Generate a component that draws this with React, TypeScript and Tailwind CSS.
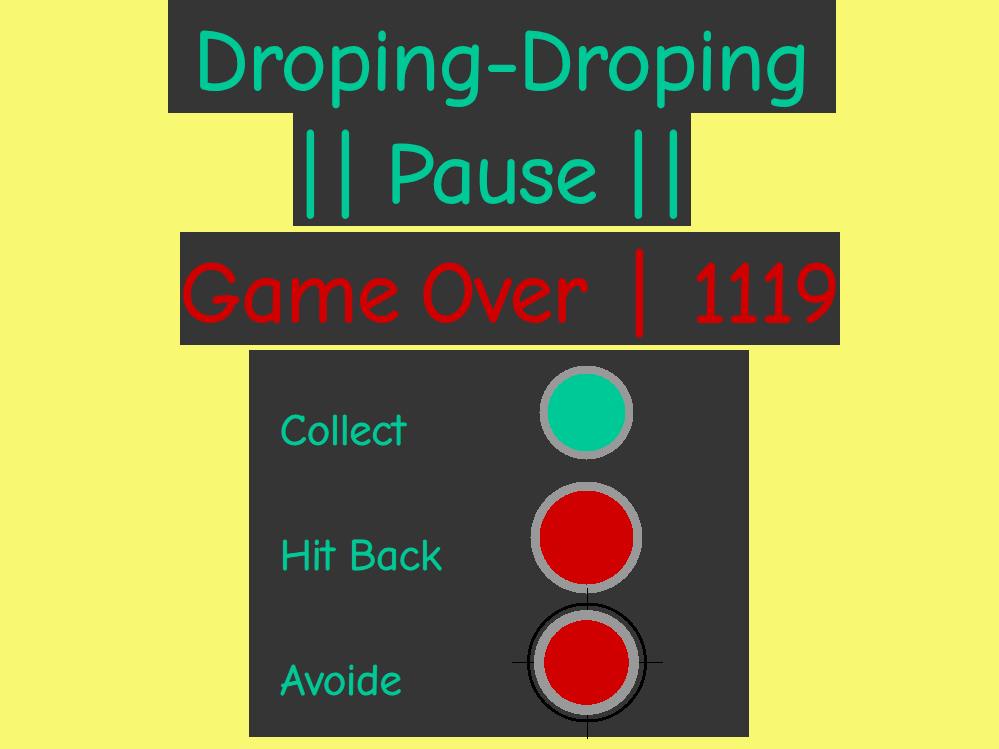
import type { ReactNode } from "react";

const GREEN = "#00c998";
const RED = "#d00000";
const GREY = "#999999";

function Banner({ className, children }: { className: string; children: ReactNode }) {
  return (
    <div
      className={`flex h-[113px] items-center whitespace-pre bg-[#353535] pt-3 text-[86px] leading-[101px] [-webkit-text-stroke:2px_currentColor] ${className}`}
    >
      {children}
    </div>
  );
}

function Bar() {
  return <span className="w-[35px] text-center">|</span>;
}

function Ball({ color, outer, inner, target }: { color: string; outer: number; inner: number; target?: boolean }) {
  return (
    <svg
      className="h-[125px] w-[152px] overflow-visible"
      viewBox="0 0 152 125"
      shapeRendering="crispEdges"
      aria-hidden="true"
    >
      {target && (
        <g fill="none" stroke="#000000">
          <path d="M0.5 62.5H152M76 -12.5V138.5" strokeWidth="1" />
          <circle cx="76" cy="62.5" r="58.5" strokeWidth="3" />
        </g>
      )}
      <circle cx="75.5" cy="62.5" r={outer} fill={GREY} />
      <circle cx="75.5" cy="62.5" r={inner} fill={color} />
    </svg>
  );
}

function LegendRow({ label, children }: { label: string; children: ReactNode }) {
  return (
    <li className="flex h-[125px] items-center">
      <span className="w-[262px] pt-9 pl-[31px] text-[44px] leading-[56px] [-webkit-text-stroke:1px_currentColor]">
        {label}
      </span>
      {children}
    </li>
  );
}

export default function App() {
  return (
    <main className="min-h-screen overflow-hidden bg-[#f8f872] font-['Comic_Sans_MS','Comic_Neue',Lato,sans-serif] text-[#00c998]">
      <div className="mx-auto flex w-[663px] flex-col items-start">
        <Banner className="w-[668px] justify-center">
          <h1>Droping-Droping</h1>
        </Banner>
        <Banner className="ml-[125px] w-[398px] justify-center">
          <Bar />
          <Bar />
          <h2 className="w-[258px] text-center">Pause</h2>
          <Bar />
          <Bar />
        </Banner>
        <Banner className="mt-1.5 ml-3 w-[660px] justify-between text-[#d00000]">
          <h2 className="flex gap-5">
            <span>Game</span>
            <span>Over</span>
          </h2>
          <Bar />
          <span>1119</span>
        </Banner>
        <ul className="mt-[5px] ml-[81px] w-[500px] bg-[#353535] pb-3">
          <LegendRow label="Collect">
            <Ball color={GREEN} outer={47} inner={39} />
          </LegendRow>
          <LegendRow label="Hit Back">
            <Ball color={RED} outer={56} inner={47} />
          </LegendRow>
          <LegendRow label="Avoide">
            <Ball color={RED} outer={52.5} inner={42.5} target />
          </LegendRow>
        </ul>
      </div>
    </main>
  );
}
